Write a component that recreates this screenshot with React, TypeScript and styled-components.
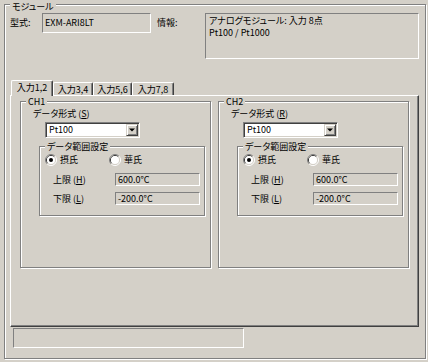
import React from "react";
import styled, { createGlobalStyle } from "styled-components";

const BG = "#d4d0c8";

const Global = createGlobalStyle`
  html, body { margin: 0; padding: 0; background: ${BG}; }
  body {
    font-family: "Noto Sans CJK JP", "Liberation Sans", sans-serif;
    font-size: 9px;
    color: #000;
    font-feature-settings: "palt";
  }
`;

const Window = styled.div`
  width: 428px;
  height: 362px;
  box-sizing: border-box;
  padding: 4px 0 0 4px;
  background: ${BG};
`;

const Group = styled.div<{ $w: number; $h: number }>`
  position: relative;
  box-sizing: border-box;
  width: ${(p) => p.$w}px;
  height: ${(p) => p.$h}px;
  border: 1px solid #808080;
  box-shadow: inset 1px 1px 0 #fff, 1px 1px 0 #fff;
  display: flex;
  flex-direction: column;
`;

const Caption = styled.span<{ $top?: number }>`
  position: absolute;
  top: ${(p) => p.$top ?? -6}px;
  left: 5px;
  padding: 0 2px;
  line-height: 11px;
  background: ${BG};
  white-space: nowrap;
`;

const ModuleBody = styled.div`
  display: flex;
  flex-direction: column;
  padding: 8px 0 0 5px;
`;

const TopRow = styled.div`
  display: flex;
  align-items: flex-start;
`;

const FieldLabel = styled.span<{ $w: number; $ml?: number }>`
  width: ${(p) => p.$w}px;
  margin-left: ${(p) => p.$ml ?? 0}px;
  line-height: 20px;
  white-space: nowrap;
`;

const StaticBox = styled.div<{ $w: number; $h: number }>`
  box-sizing: border-box;
  width: ${(p) => p.$w}px;
  height: ${(p) => p.$h}px;
  border-top: 1px solid #808080;
  border-left: 1px solid #808080;
  border-bottom: 1px solid #fff;
  border-right: 1px solid #fff;
  padding-left: 2px;
  line-height: ${(p) => p.$h - 2}px;
  white-space: nowrap;
`;

const InfoBox = styled.div`
  box-sizing: border-box;
  width: 214px;
  height: 46px;
  border-top: 1px solid #808080;
  border-left: 1px solid #808080;
  border-bottom: 1px solid #fff;
  border-right: 1px solid #fff;
  padding: 1px 3px;
  line-height: 12px;
`;

const TabArea = styled.div`
  margin: 21px 0 0 0;
  width: 409px;
  display: flex;
  flex-direction: column;
`;

const TabStrip = styled.div`
  display: flex;
  align-items: flex-end;
  height: 15px;
  padding-left: 1px;
`;

const Tab = styled.div<{ $w: number; $active?: boolean }>`
  position: relative;
  z-index: ${(p) => (p.$active ? 2 : 1)};
  box-sizing: border-box;
  width: ${(p) => p.$w}px;
  height: ${(p) => (p.$active ? 16 : 13)}px;
  margin-bottom: ${(p) => (p.$active ? -1 : 0)}px;
  background: ${BG};
  border-left: 1px solid #fff;
  border-top: 1px solid #fff;
  border-right: 1px solid #404040;
  border-top-left-radius: 2px;
  border-top-right-radius: 2px;
  box-shadow: inset -1px 0 0 #808080;
  display: flex;
  align-items: center;
  justify-content: center;
  line-height: 11px;
  white-space: nowrap;
  padding-bottom: ${(p) => (p.$active ? 2 : 0)}px;
`;

const Panel = styled.div`
  box-sizing: border-box;
  width: 409px;
  height: 232px;
  border-left: 1px solid #fff;
  border-top: 1px solid #fff;
  border-right: 1px solid #404040;
  border-bottom: 1px solid #404040;
  box-shadow: inset -1px -1px 0 #808080;
  padding: 5px 0 0 9px;
  display: flex;
  gap: 7px;
`;

const ChBody = styled.div`
  display: flex;
  flex-direction: column;
`;

const FormatLabel = styled.span`
  margin: 6px 0 0 12px;
  line-height: 12px;
  white-space: nowrap;
`;

const Combo = styled.div`
  box-sizing: border-box;
  margin: 2px 0 0 24px;
  width: 95px;
  height: 16px;
  border-top: 1px solid #808080;
  border-left: 1px solid #808080;
  border-bottom: 1px solid #fff;
  border-right: 1px solid #fff;
  box-shadow: inset 1px 1px 0 #404040, inset -1px -1px 0 ${BG};
  background: #fff;
  padding: 1px;
  display: flex;
`;

const ComboText = styled.span`
  flex: 1;
  padding-left: 2px;
  line-height: 12px;
`;

const DropButton = styled.div`
  box-sizing: border-box;
  width: 12px;
  height: 12px;
  background: ${BG};
  border-top: 1px solid ${BG};
  border-left: 1px solid ${BG};
  border-right: 1px solid #404040;
  border-bottom: 1px solid #404040;
  box-shadow: inset 1px 1px 0 #fff, inset -1px -1px 0 #808080;
  display: flex;
  align-items: center;
  justify-content: center;
`;

const RangeWrap = styled.div`
  margin: 8px 0 0 18px;
`;

const RangeBody = styled.div`
  display: flex;
  flex-direction: column;
  padding: 7px 0 0 5px;
`;

const RadioRow = styled.div`
  display: flex;
  height: 12px;
`;

const RadioItem = styled.label`
  width: 64px;
  display: flex;
  align-items: center;
  gap: 3px;
  line-height: 12px;
  white-space: nowrap;
`;

const LimitRow = styled.div<{ $mt: number }>`
  display: flex;
  align-items: center;
  margin-top: ${(p) => p.$mt}px;
  padding-left: 8px;
`;

const LimitLabel = styled.span`
  width: 62px;
  line-height: 11px;
  white-space: nowrap;
`;

const StatusBox = styled.div`
  box-sizing: border-box;
  margin: 1px 0 0 3px;
  width: 231px;
  height: 20px;
  border-top: 1px solid #808080;
  border-left: 1px solid #808080;
  border-bottom: 1px solid #fff;
  border-right: 1px solid #fff;
`;

const Mn = styled.span`
  text-decoration: underline;
`;

const Radio = ({ checked }: { checked: boolean }) => (
  <svg width="12" height="12" viewBox="0 0 12 12">
    <path d="M2.11 9.89 A5.5 5.5 0 0 1 9.89 2.11" fill="none" stroke="#808080" />
    <path d="M9.89 2.11 A5.5 5.5 0 0 1 2.11 9.89" fill="none" stroke="#fff" />
    <path d="M2.82 9.18 A4.5 4.5 0 0 1 9.18 2.82" fill="none" stroke="#404040" />
    <path d="M9.18 2.82 A4.5 4.5 0 0 1 2.82 9.18" fill="none" stroke={BG} />
    <circle cx="6" cy="6" r="4" fill="#fff" />
    {checked && <circle cx="6" cy="6" r="2" fill="#000" />}
  </svg>
);

const Arrow = () => (
  <svg width="6" height="4" viewBox="0 0 6 4">
    <polygon points="0,0.5 6,0.5 3,3.5" fill="#000" />
  </svg>
);

const Channel = ({ name, key1 }: { name: string; key1: string }) => (
  <Group $w={191} $h={167}>
    <Caption>{name}</Caption>
    <ChBody>
      <FormatLabel>
        データ形式 (<Mn>{key1}</Mn>)
      </FormatLabel>
      <Combo>
        <ComboText>Pt100</ComboText>
        <DropButton>
          <Arrow />
        </DropButton>
      </Combo>
      <RangeWrap>
        <Group $w={166} $h={70}>
          <Caption>データ範囲設定</Caption>
          <RangeBody>
            <RadioRow>
              <RadioItem>
                <Radio checked />
                摂氏
              </RadioItem>
              <RadioItem>
                <Radio checked={false} />
                華氏
              </RadioItem>
            </RadioRow>
            <LimitRow $mt={7}>
              <LimitLabel>
                上限 (<Mn>H</Mn>)
              </LimitLabel>
              <StaticBox $w={85} $h={13}>600.0°C</StaticBox>
            </LimitRow>
            <LimitRow $mt={6}>
              <LimitLabel>
                下限 (<Mn>L</Mn>)
              </LimitLabel>
              <StaticBox $w={85} $h={13}>-200.0°C</StaticBox>
            </LimitRow>
          </RangeBody>
        </Group>
      </RangeWrap>
    </ChBody>
  </Group>
);

export default function App() {
  return (
    <Window>
      <Global />
      <Group $w={422} $h={355}>
        <Caption $top={-4}>モジュール</Caption>
        <ModuleBody>
          <TopRow>
            <FieldLabel $w={32}>型式:</FieldLabel>
            <StaticBox $w={109} $h={20}>EXM-ARI8LT</StaticBox>
            <FieldLabel $w={48} $ml={6}>情報:</FieldLabel>
            <InfoBox>
              アナログモジュール: 入力 8点
              <br />
              Pt100 / Pt1000
            </InfoBox>
          </TopRow>
          <TabArea>
            <TabStrip>
              <Tab $w={42} $active>入力1,2</Tab>
              <Tab $w={40}>入力3,4</Tab>
              <Tab $w={39}>入力5,6</Tab>
              <Tab $w={42}>入力7,8</Tab>
            </TabStrip>
            <Panel>
              <Channel name="CH1" key1="S" />
              <Channel name="CH2" key1="R" />
            </Panel>
          </TabArea>
          <StatusBox />
        </ModuleBody>
      </Group>
    </Window>
  );
}
